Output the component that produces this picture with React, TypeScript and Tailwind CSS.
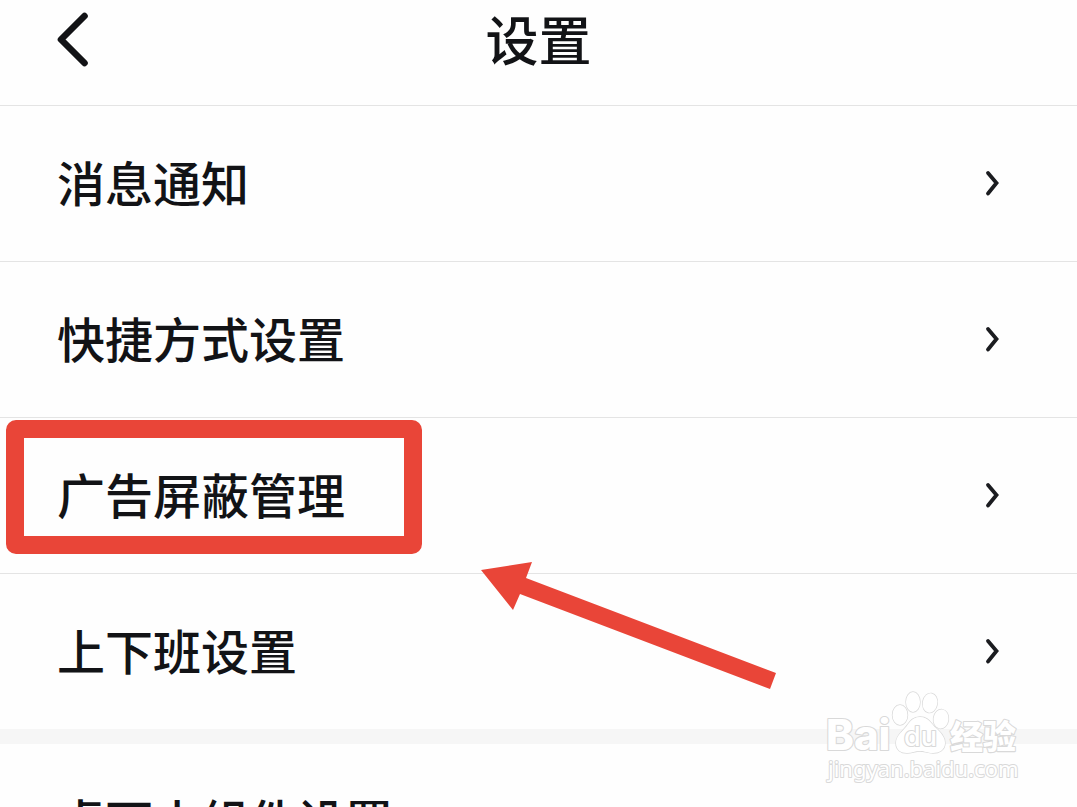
const items = ['消息通知', '快捷方式设置', '广告屏蔽管理', '上下班设置'];

function BackIcon() {
  return (
    <svg viewBox="0 0 32 56" className="h-14 w-8" fill="none" stroke="#121316" strokeWidth="6.6" strokeLinecap="round" strokeLinejoin="round" aria-hidden="true">
      <path d="M28.5 4 L5 27.5 L28.5 51" />
    </svg>
  );
}

function ChevronIcon() {
  return (
    <svg viewBox="0 0 16 28" className="h-7 w-4" fill="none" stroke="#1b1c20" strokeWidth="3.8" strokeLinecap="round" strokeLinejoin="miter" aria-hidden="true">
      <path d="M4 4 L12.5 14 L4 24.5" />
    </svg>
  );
}

function RowLink({ label }: { label: string }) {
  return (
    <a href="#" className="flex h-[155px] items-center justify-between pr-[77px] pb-[2px] pl-[57px]">
      <span className="pb-1">{label}</span>
      <ChevronIcon />
    </a>
  );
}

function Row({ label, highlighted = false }: { label: string; highlighted?: boolean }) {
  return (
    <li className="relative border-t border-[#e4e4e4]">
      <RowLink label={label} />
      {highlighted && (
        <div className="pointer-events-none absolute top-[2px] left-[6px] h-[134px] w-[416px] rounded-[10px] border-[18px] border-[#e94538]" />
      )}
    </li>
  );
}

function Arrow() {
  return (
    <svg viewBox="0 0 296 130" className="pointer-events-none absolute top-[561px] left-[481px] h-[130px] w-[296px]" aria-hidden="true">
      <path d="M0 9 L51 1 L45 17 L295 112 L289 128 L39 33 L32 49 Z" fill="#e94538" />
    </svg>
  );
}

function Watermark() {
  return (
    <svg viewBox="0 0 200 100" className="pointer-events-none absolute top-[690px] left-[824px] h-[100px] w-[200px]" fill="#ffffff" stroke="#d9d9d9" strokeWidth="2.2" strokeLinejoin="round" paintOrder="stroke">
      <g fontWeight="700">
        <text x="2" y="60" fontSize="42" fontWeight="800" fontFamily="Inter, sans-serif">Bai</text>
        <g strokeWidth="1.4">
          <ellipse cx="76" cy="25" rx="7.5" ry="10" />
          <ellipse cx="89" cy="12" rx="7" ry="10" />
          <ellipse cx="106" cy="13" rx="7.3" ry="9.7" transform="rotate(10 106 13)" />
          <ellipse cx="117" cy="29" rx="7.5" ry="9.5" transform="rotate(8 117 29)" />
          <path d="M96 27 C105 27 107 34 112 38 C117 43 121 47 121 53 C121 60 115 63 109 63 C103 63 101 61 96 61 C91 61 88 63 83 63 C77 63 72 60 72 53 C72 46 77 43 81 38 C85 34 87 27 96 27 Z" />
        </g>
        <text x="80" y="56" fontSize="27" fontWeight="500" fontFamily="Inter, sans-serif">du</text>
        <text x="126" y="59" fontSize="33" fontWeight="900" fontFamily="'Noto Sans CJK SC', sans-serif">经验</text>
      </g>
      <text x="4" y="87" fontSize="22" strokeWidth="2" fontFamily="'Noto Sans', sans-serif" fontWeight="400">jingyan.baidu.com</text>
    </svg>
  );
}

export default function App() {
  return (
    <div className="relative h-screen overflow-hidden bg-[#fefefe] font-['Noto_Sans_CJK_SC',sans-serif] text-[48px] leading-[72px] font-medium text-[#121316]">
      <header className="grid h-[105px] grid-cols-[1fr_auto_1fr] items-start px-[56px]">
        <button type="button" aria-label="返回" className="mt-3 w-8 cursor-pointer">
          <BackIcon />
        </button>
        <h1 className="text-[53px] leading-[76px]">设置</h1>
      </header>
      <main>
        <ul>
          {items.map((label) => (
            <Row key={label} label={label} highlighted={label === '广告屏蔽管理'} />
          ))}
        </ul>
        <div className="h-[15px] bg-[#f6f6f6]" />
        <ul>
          <li>
            <RowLink label="桌面小组件设置" />
          </li>
        </ul>
      </main>
      <Arrow />
      <Watermark />
    </div>
  );
}
